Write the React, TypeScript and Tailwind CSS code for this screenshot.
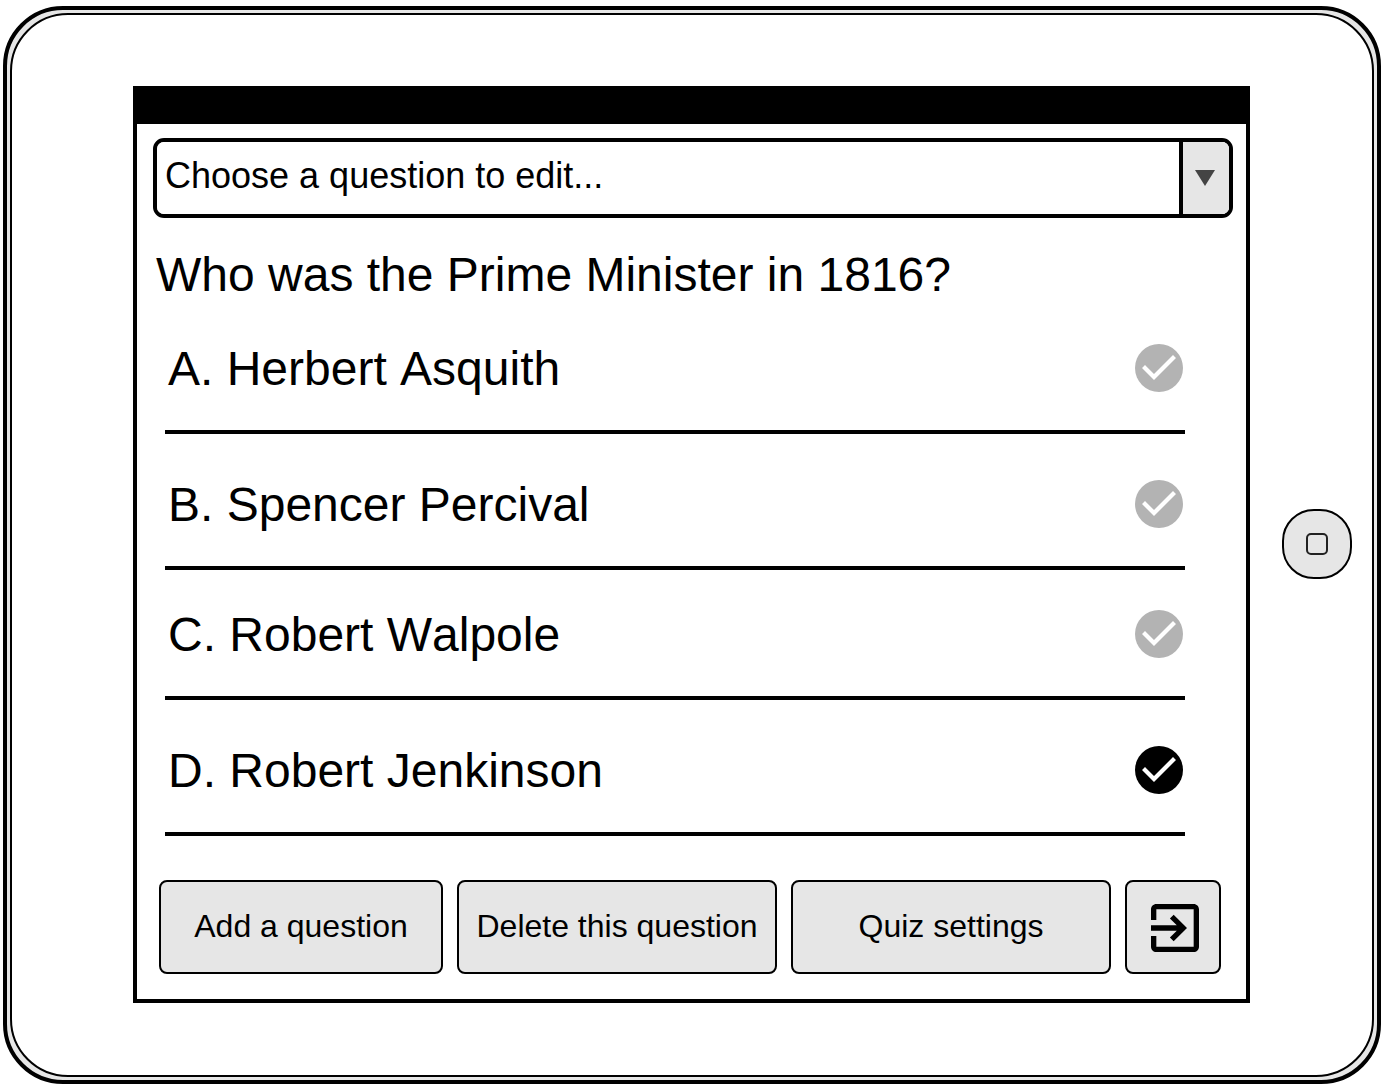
import { useState } from 'react';

const answers = [
  { id: 'a', label: 'A. Herbert Asquith', spacing: 'mt-[41px]' },
  { id: 'b', label: 'B. Spencer Percival', spacing: 'mt-[46px]' },
  { id: 'c', label: 'C. Robert Walpole', spacing: 'mt-10' },
  { id: 'd', label: 'D. Robert Jenkinson', spacing: 'mt-[46px]' },
];

const buttonClass =
  'flex h-[94px] items-center justify-center whitespace-nowrap rounded-lg border-2 border-black bg-[#e6e6e6] text-[32px] leading-9';

function CheckIcon() {
  return (
    <svg
      viewBox="0 0 48 48"
      className="size-12 shrink-0 text-[#b3b3b3] peer-checked:text-black"
      aria-hidden="true"
    >
      <circle cx="24" cy="24" r="24" fill="currentColor" />
      <path d="M7 24L10 21L19 30L38 11L41 14L19 36Z" fill="white" />
    </svg>
  );
}

function ExitIcon() {
  return (
    <svg viewBox="3 3 18 18" className="size-12" fill="currentColor" aria-hidden="true">
      <path d="M10.09 15.59L11.5 17l5-5-5-5-1.41 1.41L12.67 11H3v2h9.67l-2.58 2.59zM19 3H5c-1.11 0-2 .9-2 2v4h2V5h14v14H5v-4H3v4c0 1.1.89 2 2 2h14c1.1 0 2-.9 2-2V5c0-1.1-.9-2-2-2z" />
    </svg>
  );
}

function QuestionSelect() {
  return (
    <div className="relative h-20 overflow-hidden rounded-[11px] border-4 border-black bg-black">
      <select
        aria-label="Question to edit"
        className="h-full w-full appearance-none bg-white pb-1 pl-2 pr-14 text-4xl text-black"
      >
        <option>Choose a question to edit...</option>
        <option>Who was the Prime Minister in 1816?</option>
      </select>
      <span className="pointer-events-none absolute inset-y-0 right-0 flex w-[50px] items-center justify-center border-l-4 border-black bg-[#e6e6e6] pr-0.5">
        <svg viewBox="0 0 20 16" className="h-4 w-5" aria-hidden="true">
          <path d="M0 0H20L10 16Z" fill="#444444" />
        </svg>
      </span>
    </div>
  );
}

export default function App() {
  const [correct, setCorrect] = useState('d');

  return (
    <div className="bg-white px-[3px] pb-0.5 pt-1.5 font-['Liberation_Sans',Arial,sans-serif] text-black [font-kerning:none]">
      <div className="rounded-[60px] border-4 border-black bg-[#e6e6e6] p-[3px]">
        <div className="flex items-center rounded-[58px] border-2 border-black bg-white pb-[72px] pl-[121px] pr-5 pt-[71px]">
          <main className="min-w-0 flex-1 border-4 border-black">
            <div className="h-[34px] bg-black" />
            <div className="pb-[25px] pl-4 pr-[13px] pt-3.5">
              <QuestionSelect />
              <fieldset>
                <legend className="pl-[3px] pt-[29px] text-5xl leading-[56px]">
                  Who was the Prime Minister in 1816?
                </legend>
                <div className="pl-3 pr-12">
                  {answers.map((answer) => (
                    <label
                      key={answer.id}
                      className={`relative flex cursor-pointer items-start justify-between border-b-4 border-black pb-9 pl-[3px] pr-0.5 ${answer.spacing}`}
                    >
                      <span className="text-5xl leading-[50px]">{answer.label}</span>
                      <input
                        type="radio"
                        name="correct-answer"
                        className="peer sr-only"
                        checked={correct === answer.id}
                        onChange={() => setCorrect(answer.id)}
                      />
                      <CheckIcon />
                    </label>
                  ))}
                </div>
              </fieldset>
              <div className="mt-11 grid grid-cols-[284fr_320fr_320fr_96px] gap-3.5 pl-1.5 pr-3">
                <button type="button" className={`${buttonClass} pb-0.5`}>
                  Add a question
                </button>
                <button type="button" className={`${buttonClass} pb-0.5`}>
                  Delete this question
                </button>
                <button type="button" className={`${buttonClass} pb-0.5`}>
                  Quiz settings
                </button>
                <button type="button" aria-label="Exit" className={`${buttonClass} pl-1 pt-0.5`}>
                  <ExitIcon />
                </button>
              </div>
            </div>
          </main>
          <button
            type="button"
            aria-label="Home"
            className="mb-0.5 ml-8 flex size-[70px] shrink-0 items-center justify-center rounded-[32px] border-2 border-black bg-[#e6e6e6]"
          >
            <span className="size-[22px] rounded-[5px] border-2 border-[#222222]" />
          </button>
        </div>
      </div>
    </div>
  );
}
